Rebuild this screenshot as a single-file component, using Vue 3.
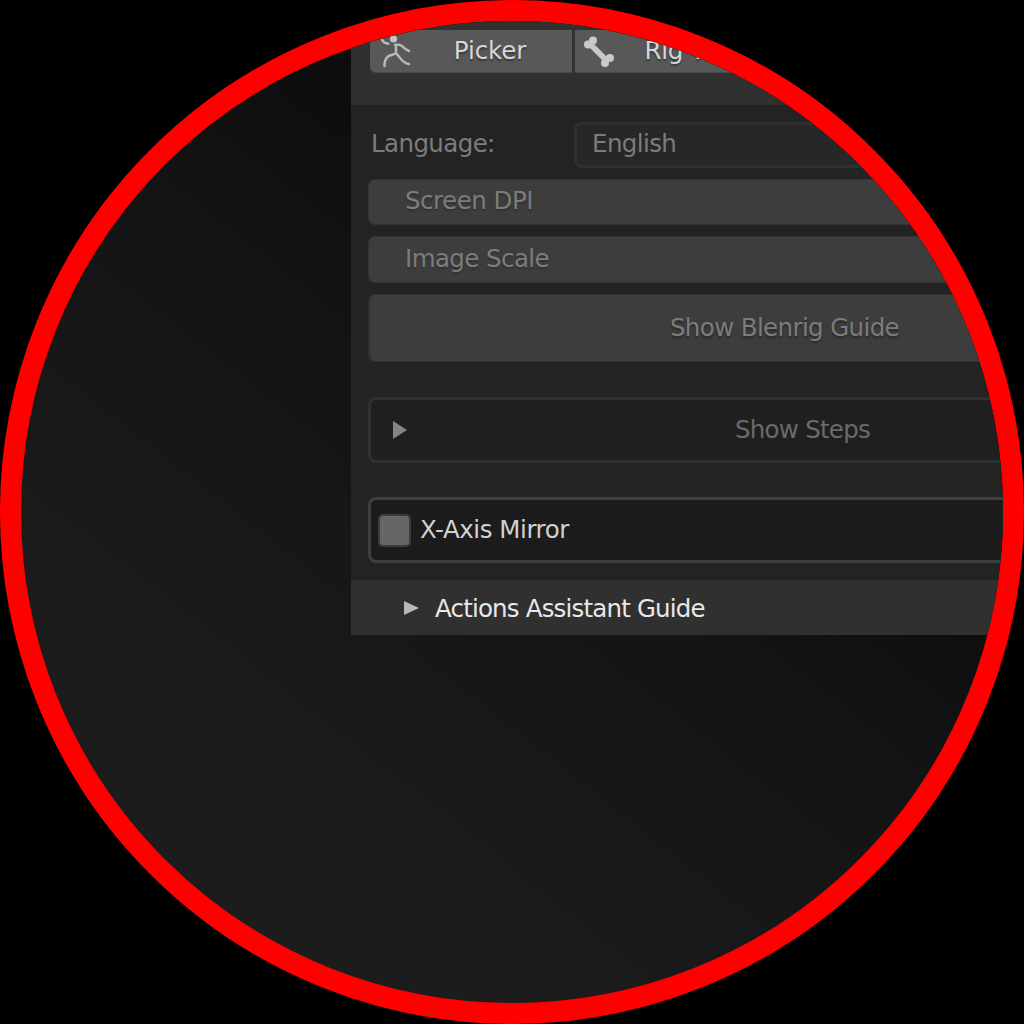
<script setup>
const sliders = ['Screen DPI', 'Image Scale']
</script>

<template>
  <main class="lens">
    <section class="panel">
      <header class="tabs">
        <button class="tab first">
          <svg class="icon" width="44" height="42" viewBox="0 0 44 42" fill="none" stroke="#b8b8b8" stroke-width="2.5" stroke-linecap="round" stroke-linejoin="round">
            <circle cx="23.5" cy="9" r="3.6" fill="#c3c3c3" stroke="none" />
            <path d="M12 9.700Q14 13.500 18.300 13.700M25 14.700H29.500C32.500 15 33 18.500 39 21M26 15.500V22.500C24.500 25.500 21.500 24 18 26.500Q14.300 29.500 14.500 36M26 23.500C30 26 31 33 39 34" />
          </svg>
          <span>Picker</span>
        </button>
        <button class="tab rig">
          <svg class="icon" width="44" height="42" viewBox="0 0 44 42" fill="#c9c9c9">
            <path d="M15 14L32 31" stroke="#c9c9c9" stroke-width="5.600" />
            <circle cx="18" cy="10.500" r="4" /><circle cx="13" cy="14.500" r="4" />
            <circle cx="35" cy="28" r="4" /><circle cx="30" cy="33" r="4" />
          </svg>
          <span>Rig Tools</span>
        </button>
      </header>
      <div class="body">
        <div class="row">
          <label>Language:</label>
          <div class="select">English</div>
        </div>
        <div v-for="name in sliders" :key="name" class="slider">{{ name }}</div>
        <button class="guide">Show Blenrig Guide</button>
        <div class="box steps">
          <svg width="16" height="20" viewBox="0 0 16 20"><path d="M1 1L15 10L1 19Z" fill="#858585" /></svg>
          <span>Show Steps</span>
        </div>
        <div class="box mirror">
          <i class="check"></i>
          <span>X-Axis Mirror</span>
        </div>
      </div>
      <footer class="foot">
        <svg width="16" height="14" viewBox="0 0 16 14"><path d="M1 0L16 7L1 14Z" fill="#b8b8b8" /></svg>
        <span>Actions Assistant Guide</span>
      </footer>
    </section>
  </main>
</template>

<style>
html, body { background: #000; overflow: hidden; }
</style>

<style scoped>
* { box-sizing: border-box; }
.lens {
  width: 1024px; height: 1024px; border: 21px solid #f00; border-radius: 50%;
  overflow: hidden; padding-left: 330px;
  background: linear-gradient(38deg, #1c1c1c 22%, #131313 54%, #080808 78%);
  font: 24.5px/30px "DejaVu Sans", sans-serif; letter-spacing: -0.6px; color: #7c7c7c; white-space: nowrap;
}
.panel { width: 866px; background: #232323; }
button { font: inherit; letter-spacing: inherit; color: inherit; border: 0; margin: 0; padding: 0; }
.tabs { height: 84px; background: #303030; padding: 9px 17px 0 19px; display: flex; gap: 3px; }
.tab {
  width: 202px; height: 43px; background: #585858; color: #d6d6d6; letter-spacing: -0.1px;
  display: flex; align-items: center; text-shadow: 0 2px 2px #0006; border-bottom: 1px solid #484848;
}
.tab.first { border-radius: 6px 0 0 6px; }
.tab .icon { flex: none; }
.tab span { flex: 1; text-align: center; padding-right: 6px; }
.tab.rig span { padding-right: 2px; letter-spacing: -0.3px; }
.body { height: 475px; padding: 17px 17px 0; display: flex; flex-direction: column; }
.row { display: flex; height: 46px; align-items: center; margin-bottom: 11px; }
.row label { width: 206px; padding: 0 0 2px 3px; }
.select { flex: 1; height: 46px; border: 3px solid #2f2f2f; border-radius: 7px; background: #272727; padding: 4px 15px; }
.slider {
  height: 46px; margin-bottom: 11px; background: #3d3d3d; border: 1px solid #333;
  border-radius: 7px; padding: 6px 36px; text-shadow: 0 2px 2px #0003; letter-spacing: -0.5px;
}
.slider + .slider { height: 47px; margin-bottom: 10px; padding-top: 7px; letter-spacing: -0.58px; }
.guide { height: 68px; margin: 1px 0 35px; background: #3d3d3d; border: 1px solid #303030; border-left-width: 2px; border-radius: 7px; text-shadow: 0 2px 2px #0005; letter-spacing: -0.62px; }
.box { height: 66px; flex: none; display: flex; align-items: center; border: 3px solid #303030; border-radius: 8px; background: #1f1f1f; }
.box span { padding-bottom: 1px; }
.steps { color: #6a6a6a; padding-left: 21px; margin-bottom: 34px; letter-spacing: -0.75px; }
.steps span { flex: 1; text-align: center; }
.mirror { background: #1c1c1c; border-color: #3f3f3f; color: #d2d2d2; padding-left: 7px; letter-spacing: -0.45px; }
.check { width: 33px; height: 33px; background: #666; border: 2px solid #3c3c3c; border-radius: 5px; margin-right: 9px; }
.foot { height: 55px; background: #303030; color: #e8e8e8; display: flex; align-items: center; padding-left: 52px; gap: 16px; letter-spacing: -0.82px; }
.foot span { padding-top: 2px; }
</style>
